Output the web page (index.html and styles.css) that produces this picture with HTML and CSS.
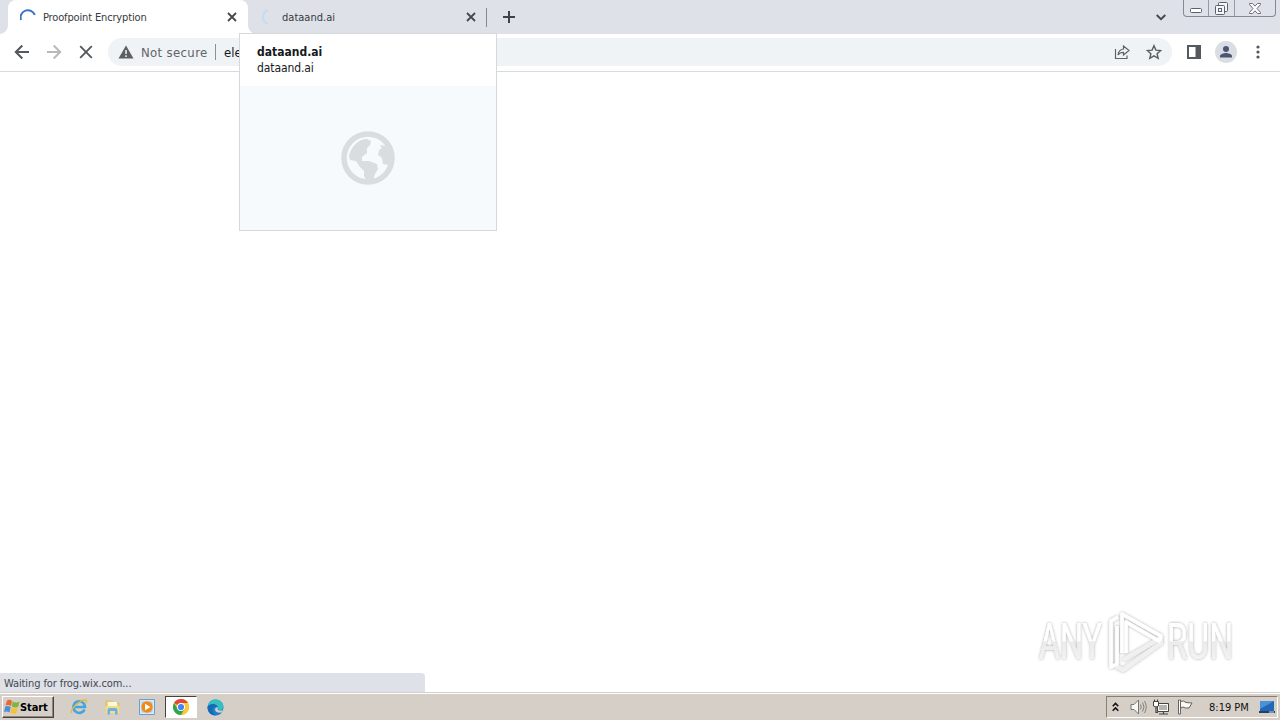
FILE: index.html
```html
<!DOCTYPE html>
<html lang="en">
<head>
<meta charset="utf-8">
<title>Proofpoint Encryption</title>
<link rel="stylesheet" href="styles.css">
</head>
<body>
<div class="desktop">
  <header class="tabstrip">
    <div class="tab tab-active">
      <svg class="spinner" width="16" height="16" viewBox="0 0 16 16"><path d="M1 11A7.200 7.200 0 0 1 14.800 6" fill="none" stroke="#3474c8" stroke-width="2"/></svg>
      <span class="tab-title title-main">Proofpoint Encryption</span>
      <svg class="tab-close" width="10" height="10" viewBox="0 0 10 10"><path d="M1 1l8 8M9 1L1 9" stroke="#45484c" stroke-width="1.8"/></svg>
    </div>
    <div class="tab tab-idle">
      <svg class="spinner" width="16" height="16" viewBox="0 0 16 16"><path d="M10 1.300A7 7 0 0 0 10 14.700" fill="none" stroke="#c9d9f0" stroke-width="2"/></svg>
      <span class="tab-title title-idle">dataand.ai</span>
      <svg class="tab-close" width="10" height="10" viewBox="0 0 10 10"><path d="M1 1l8 8M9 1L1 9" stroke="#45484c" stroke-width="1.8"/></svg>
    </div>
    <svg class="new-tab" width="12" height="12" viewBox="0 0 12 12"><path d="M6 0v12M0 6h12" stroke="#3f4348" stroke-width="2"/></svg>
    <svg class="tab-search" width="10" height="7" viewBox="0 0 10 7"><path d="M.7 1L5 5.200 9.300 1" fill="none" stroke="#45484d" stroke-width="1.9"/></svg>
    <div class="window-controls">
      <span class="wc wc-min"><svg width="12" height="5" viewBox="0 0 12 5"><rect x=".5" y=".5" width="11" height="4" rx="1" fill="#fff" stroke="#5c606b"/></svg></span>
      <span class="wc wc-max"><svg width="13" height="13" viewBox="0 0 13 13"><g fill="#f5f6f8" stroke="#5c606b"><rect x="3.500" y=".5" width="9" height="9" rx="1"/><rect x=".5" y="3.500" width="9" height="9" rx="1"/><rect x="3.500" y="6.500" width="3" height="3"/></g></svg></span>
      <span class="wc wc-close"><svg width="12" height="11" viewBox="0 0 12 11"><path d="M.5.5h3L6 3.200 8.500.5h3v1L8 5.500l3.500 4v1h-3L6 7.800 3.500 10.500h-3v-1L4 5.500.5 1.500z" fill="#fff" stroke="#6b6f79"/></svg></span>
    </div>
  </header>

  <div class="toolbar">
    <svg class="nav" width="16" height="16" viewBox="0 0 16 16"><path d="M15 8H2M8.300 1.500L1.800 8l6.500 6.500" fill="none" stroke="#55585c" stroke-width="2"/></svg>
    <svg class="nav" width="16" height="16" viewBox="0 0 16 16"><path d="M1 8h13M7.700 1.500L14.200 8l-6.500 6.500" fill="none" stroke="#b7b9bc" stroke-width="2"/></svg>
    <svg class="nav" width="16" height="16" viewBox="0 0 16 16"><path d="M2.200 2.200l11.600 11.600M13.800 2.200L2.200 13.800" stroke="#55585c" stroke-width="1.900"/></svg>
    <div class="omnibox">
      <svg class="warn" width="16" height="14" viewBox="0 0 16 14"><path d="M8 .5L15.500 13.500H.5z" fill="#5b5e62"/><path d="M8 5v4M8 10.300v1.700" stroke="#f1f3f4" stroke-width="1.500"/></svg>
      <span class="secure">Not secure</span>
      <span class="divider"></span>
      <span class="url">ele</span>
      <svg class="share" width="16" height="16" viewBox="0 0 16 16"><path d="M1.500 5v9.500h11.500v-3M9.500 5V2l5.500 4.500-5.500 4.500V8.300C7 8.300 5.200 9 4 11c.3-3.300 2.200-5.500 5.500-6z" fill="none" stroke="#5f6368" stroke-width="1.200"/></svg>
      <svg class="star" width="16" height="16" viewBox="0 0 16 16"><path d="M8 1.700l1.900 4.400 4.800.4-3.600 3.200 1.100 4.700L8 11.900l-4.200 2.500 1.100-4.700L1.300 6.500l4.800-.4z" fill="none" stroke="#5a5d62" stroke-width="1.400"/></svg>
    </div>
    <svg class="side" width="14" height="14" viewBox="0 0 14 14"><path d="M1 1h12v12H1z" fill="#fff" stroke="#55585c" stroke-width="2"/><path d="M8.500 0H14v14H8.500z" fill="#55585c"/></svg>
    <svg class="avatar" width="22" height="22" viewBox="0 0 22 22"><circle cx="11" cy="11" r="11" fill="#dadde3"/><circle cx="11" cy="7.900" r="3" fill="#4c5571"/><path d="M5 16.500v-1.400c0-2 4-3 6-3s6 1 6 3v1.400z" fill="#4c5571"/></svg>
    <svg class="more" width="4" height="14" viewBox="0 0 4 14"><g fill="#55585c"><circle cx="2" cy="2" r="1.600"/><circle cx="2" cy="7" r="1.600"/><circle cx="2" cy="12" r="1.600"/></g></svg>
  </div>

  <main class="page">
    <svg class="watermark" width="214" height="78" viewBox="0 0 214 78">
      <defs>
        <linearGradient id="fade" gradientUnits="userSpaceOnUse" x1="0" y1="16" x2="0" y2="54"><stop offset=".5" stop-color="#fff"/><stop offset=".52" stop-color="#ebebeb"/><stop offset="1" stop-color="#f3f3f3"/></linearGradient>
        <filter id="shade" x="-10%" y="-10%" width="120%" height="125%"><feDropShadow dx="0" dy="0" stdDeviation="1.500" flood-color="#000" flood-opacity=".36"/></filter>
      </defs>
      <g filter="url(#shade)">
        <text class="logo-text" x="5" y="53" textLength="63" lengthAdjust="spacingAndGlyphs" fill="url(#fade)">ANY</text>
        <text class="logo-text" x="133" y="53" textLength="66" lengthAdjust="spacingAndGlyphs" fill="url(#fade)">RUN</text>
        <path d="M89 54l38-22v5L89 64l-7-4" fill="none" stroke="#f0f0f0" stroke-width="4" stroke-linejoin="round"/>
        <path d="M84 11l-7 4v46l6-3V20" fill="none" stroke="#fff" stroke-width="3.500" stroke-linejoin="round"/>
        <path d="M88 47V8l39 22-2 5-33-19v31" fill="none" stroke="#fff" stroke-width="3.500" stroke-linejoin="round"/>
      </g>
    </svg>
    <div class="status">Waiting for frog.wix.com...</div>
  </main>

  <aside class="hovercard">
    <div class="hover-text">
      <div class="hover-title">dataand.ai</div>
      <div class="hover-domain">dataand.ai</div>
    </div>
    <div class="hover-preview">
      <svg width="54" height="54" viewBox="0 0 54 54"><circle cx="27" cy="27" r="24" fill="none" stroke="#d9dde0" stroke-width="5.500"/><path d="M8 25c2-10 10-17 18-17l4 2-1 4-3 3v5l-5 4v4h7l8 3 1 5-3 5-2 6-6 1-3-5v-5l-4-4-4-6-6-1zM39 14l6 1 5 11-2 8-6-1-1-6-4-3 1-5 3-2z" fill="#d9dde0"/></svg>
    </div>
  </aside>

  <footer class="taskbar">
    <div class="start">
      <svg width="16" height="16" viewBox="0 0 16 16"><path d="M3 1.500Q6 0 8 2L7 7Q4.500 5.500 1.500 6.500z" fill="#ea6932"/><path d="M8.700 2.500q3.500 2 7 0L14 8Q11 9 7.700 7.500z" fill="#7db63c"/><path d="M1.300 7.500Q4 6.500 6.700 8L5.500 13.500Q3 12 0 13z" fill="#4b8fd8"/><path d="M7.500 8.500q3 1.500 6.200.5L12.300 14.500q-2.800 1-6 -.7z" fill="#f5c237"/></svg>
      <span class="start-label">Start</span>
    </div>
    <div class="launch">
      <svg width="18" height="18" viewBox="0 0 18 18"><path d="M14.500 11.500A5.800 5.800 0 1 1 15 9H5" fill="none" stroke="#43a5df" stroke-width="2.600"/><path d="M1.500 15C-.5 11 12 .5 16 2.200c1 .5.700 1.800 0 3" fill="none" stroke="#e8b93e" stroke-width="1.400"/></svg>
    </div>
    <div class="launch">
      <svg width="18" height="18" viewBox="0 0 18 18"><path d="M2 3h6l1 2h6v9H2z" fill="#efd27a" stroke="#d8b65a" stroke-width=".7"/><path d="M4 4h9v4H4z" fill="#fff7d8"/><path d="M1.500 8h14v7h-14z" fill="#f3dd8c"/><path d="M3.500 16.500v-4.500q0-2 2-2h6q2 0 2 2v4.500h-2.500v-3.500h-5v3.500z" fill="#6cb2de"/></svg>
    </div>
    <div class="launch">
      <svg width="18" height="18" viewBox="0 0 18 18"><path d="M1.500 1.500h15v15h-15z" fill="#dcebf8" stroke="#6a9fcc"/><path d="M3.500 3.500h11v11h-11z" fill="#a9cdea"/><circle cx="9" cy="9" r="5.700" fill="#f28a1b"/><path d="M7 5.800L12.500 9 7 12.200z" fill="#fff"/></svg>
    </div>
    <div class="launch launch-active">
      <svg width="16" height="16" viewBox="0 0 16 16"><circle cx="8" cy="8" r="8" fill="#f8c62e"/><path d="M8 8L1.070 4A8 8 0 0 1 14.930 4z" fill="#df4936"/><path d="M8 8V4h6.930A8 8 0 0 1 8 16l3.500-6z" fill="#fbc934"/><path d="M1.070 4A8 8 0 0 0 8 16l3.500-6L8 8 4.600 10z" fill="#2ea553"/><circle cx="8" cy="8" r="4" fill="#fff"/><circle cx="8" cy="8" r="3.100" fill="#4285f4"/></svg>
    </div>
    <div class="launch">
      <svg width="17" height="17" viewBox="0 0 17 17"><circle cx="8.500" cy="8.500" r="8" fill="#1782cf"/><path d="M.8 7C2 1.500 6 .5 8.500.5c5 0 8 3.500 8 7 0 3-2.500 4-5 3.500C11.500 6 6 3.500.8 7z" fill="#36bfc0"/><path d="M.6 7.500C5 3.500 10 5 11 8.500 7 6.500 4.500 9 6 13 7 15.500 9 16.500 9 16.500 3 16.500 0 12 .6 7.500z" fill="#1769b7"/><path d="M11 8.500c-1 2 0 3.500 5 2.800l-.8 2c-3 1-7 0-7.200-2.600C8 9 9.500 8 11 8.500z" fill="#d4d0c8"/></svg>
    </div>
    <div class="tray">
      <svg width="7" height="10" viewBox="0 0 7 10"><path d="M.7 4.200L3.500 1.400l2.800 2.800M.7 8.700l2.800-2.800 2.800 2.800" fill="none" stroke="#111" stroke-width="1.500"/></svg>
      <svg class="tray-sound" width="17" height="16" viewBox="0 0 17 16"><path d="M1 5.500h3L8.500 1v14L4 10.500H1z" fill="#f6f6f4" stroke="#77756f"/><path d="M10.500 5.500q1.500 2.500 0 5M12.500 3.500q3 4.500 0 9M14.500 2q3.500 6 0 12" fill="none" stroke="#85837e"/></svg>
      <svg class="tray-net" width="16" height="16" viewBox="0 0 16 16"><path d="M4.500 4.500h11v8h-11z" fill="#b3b5b2" stroke="#45443f"/><path d="M5.500 5.500h9v6h-9z" fill="none" stroke="#fff"/><path d="M6 15h9M10.500 13v2M3 7v6.500h2" fill="none" stroke="#45443f" stroke-width="1.200"/><path d="M.5 2.500h5V7L3 8 .5 7zM1.500.5v2M4.500.5v2" fill="#fff" stroke="#45443f"/></svg>
      <svg class="tray-flag" width="16" height="16" viewBox="0 0 16 16"><path d="M1.500 1h2v14h-2z" fill="#fff" stroke="#65635d"/><path d="M3.500 2.500q3-1.500 5.500 1l6 .5-3 5H8.500q-2.500-2-5 0z" fill="#f8f8f6" stroke="#65635d"/></svg>
      <span class="clock">8:19 PM</span>
      <svg class="tray-desktop" width="16" height="14" viewBox="0 0 16 14"><path d="M1 1h14v10H1z" fill="#2367b8"/><path d="M1 1h14L1 9z" fill="#4a91d8"/><path d="M0 11h16v2H0z" fill="#24415f"/><path d="M10 11.500h5v1h-5z" fill="#dce5ee"/></svg>
    </div>
  </footer>
</div>
</body>
</html>
```
FILE: styles.css
```css
* { box-sizing: border-box; }
body {
  margin: 0;
  font-family: "DejaVu Sans Condensed", "DejaVu Sans", sans-serif;
  font-size: 11px;
  color: #17191c;
  background: #fff;
}
svg { display: block; flex: none; }
.desktop {
  position: relative;
  display: flex;
  flex-direction: column;
  width: 1280px;
  height: 720px;
  overflow: hidden;
}
.tabstrip {
  display: flex;
  align-items: center;
  height: 34px;
  padding: 0 4px 0 8px;
  background: #dee1e8;
}
.tab { position: relative; display: flex; align-items: center; height: 34px; white-space: nowrap; }
.tab-active {
  width: 240px;
  padding: 0 11px 0 12px;
  background: #fff;
  border-radius: 8px 8px 0 0;
}
.tab-active::before,
.tab-active::after { content: ""; position: absolute; bottom: 0; width: 8px; height: 8px; }
.tab-active::before { left: -8px; background: radial-gradient(circle at 0 0, transparent 7.500px, #fff 8px); }
.tab-active::after { right: -8px; background: radial-gradient(circle at 100% 0, transparent 7.500px, #fff 8px); }
.tab-idle { width: 239px; padding: 0 11px 0 10px; }
.tab-idle::after { content: ""; position: absolute; right: 0; top: 8px; width: 1px; height: 19px; background: #858890; }
.tab-title { margin-left: 7px; color: #37393d; }
.title-main { letter-spacing: -0.15px; }
.title-idle { margin-left: 8px; letter-spacing: 0.02px; }
.tab-close { margin-left: auto; }
.new-tab { margin-left: 16px; }
.tab-search { margin-left: auto; }
.window-controls {
  display: flex;
  align-self: flex-start;
  width: 93px;
  height: 17px;
  margin-left: 17px;
  border: 1px solid #858994;
  border-top: 0;
  border-radius: 0 0 4px 4px;
}
.wc { display: flex; justify-content: center; align-items: center; height: 16px; }
.wc + .wc { border-left: 1px solid #969aa4; }
.wc-min { width: 24px; padding-top: 5px; }
.wc-max { width: 26px; }
.wc-close { flex: 1; }
.toolbar {
  display: flex;
  align-items: center;
  height: 38px;
  padding: 0 20px 1px 14px;
  border-bottom: 1px solid #d8dadd;
  background: #fff;
}
.nav { margin-right: 16px; }
.omnibox {
  display: flex;
  align-items: center;
  width: 1064px;
  height: 28px;
  margin-left: -2px;
  padding: 0 10px;
  border-radius: 14px;
  background: #f0f3f6;
  font-size: 13px;
}
.secure { margin-left: 7px; color: #5f6368; width: 67px; white-space: nowrap; letter-spacing: 0.35px; }
.divider { width: 1px; height: 16px; margin: 0 8px 0 7px; background: #8c9096; }
.url { color: #17191c; }
.share { margin-left: auto; }
.star { margin-left: 16px; }
.side { margin-left: 15px; }
.avatar { margin-left: 14px; }
.more { margin-left: auto; }
.page { position: relative; flex: 1; }
.watermark { position: absolute; left: 1034px; top: 534px; }
.logo-text { font: 50px "Roboto", sans-serif; }
.status {
  position: absolute;
  left: 0;
  bottom: 0;
  width: 425px;
  height: 19px;
  padding: 4px 4px 1px;
  line-height: 14px;
  border-radius: 0 4px 0 0;
  background: #dee1e8;
  color: #44474c;
  letter-spacing: -0.1px;
}
.hovercard {
  position: absolute;
  left: 239px;
  top: 33px;
  display: flex;
  flex-direction: column;
  width: 258px;
  height: 198px;
  border: 1px solid #d6d8da;
  background: #fff;
}
.hover-text { height: 52px; padding: 10px 17px 8px; font-size: 12px; line-height: 16px; }
.hover-title { font-weight: bold; }
.hover-domain { letter-spacing: -0.1px; }
.hover-preview { display: flex; flex: 1; align-items: center; justify-content: center; padding-bottom: 2px; background: #f6fafd; border-top: 1px solid #f8f8f8; }
.taskbar {
  display: flex;
  align-items: center;
  height: 28px;
  padding: 1px 2px 0 2px;
  border-top: 1px solid #d5d1c8;
  box-shadow: inset 0 1px #fff;
  background: #d6cfc8;
}
.start {
  display: flex;
  align-items: center;
  width: 52px;
  height: 22px;
  padding-left: 1px;
  border: 1px solid;
  border-color: #fff #46443f #46443f #fff;
  box-shadow: inset -1px -1px #8b8780;
  font-weight: bold;
  color: #000;
}
.start-label { letter-spacing: -0.1px; }
.launch { display: flex; align-items: center; justify-content: center; width: 32px; height: 22px; margin-left: 2px; }
.start + .launch { margin-left: 9px; }
.launch-active { border: 1px solid; border-color: #45433f #fff #fff #45433f; background: #fff; }
.tray {
  display: flex;
  align-items: center;
  width: 172px;
  height: 22px;
  margin-left: auto;
  padding-left: 5px;
  border: 1px solid;
  border-color: #858078 #fff #fff #858078;
}
.tray-sound { margin-left: 11px; }
.tray-net { margin-left: 6px; }
.tray-flag { margin-left: 8px; }
.clock { width: 41px; margin-left: 16px; white-space: nowrap; letter-spacing: 0; color: #111; }
.tray-desktop { margin-left: 9px; }
```
